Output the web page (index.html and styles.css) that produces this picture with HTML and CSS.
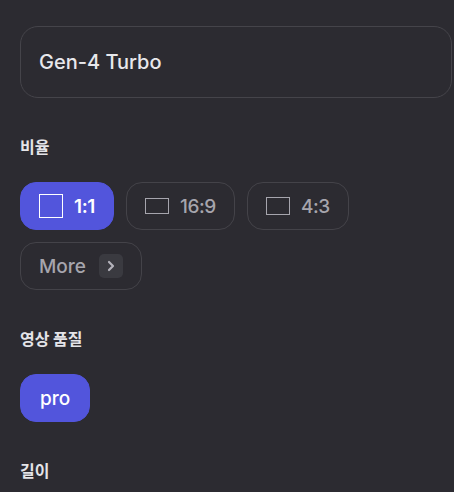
FILE: index.html
```html
<!DOCTYPE html>
<html>
<head>
    <meta charset="utf-8">
    <link rel="stylesheet" href="styles.css">
</head>
<body>
<div class="model">Gen-4 Turbo</div>

<div class="section">
    <div class="label">비율</div>
    <div class="chips">
        <div class="chip on"><span class="shape sq"></span>1:1</div>
        <div class="chip"><span class="shape wide"></span>16:9</div>
        <div class="chip"><span class="shape std"></span>4:3</div>
        <div class="chip more">More<span class="arrow">
            <svg width="24" height="24" viewBox="0 0 24 24"><path d="M10 8l4 4-4 4" fill="none" stroke="#b4b3bb" stroke-width="2.2" stroke-linecap="round" stroke-linejoin="round"/></svg>
        </span></div>
    </div>
</div>

<div class="section">
    <div class="label">영상 품질</div>
    <div class="chips">
        <div class="chip on pro">pro</div>
    </div>
</div>

<div class="section">
    <div class="label">길이</div>
</div>
</body>
</html>
```

FILE: styles.css
```css
body{
    margin:0;
    padding:26px 2px 0 20px;
    background:#2c2b31;
    font-family: Inter, "Noto Sans CJK KR", sans-serif;
    color:#e6e6ea;
}
.model{
    height:72px;
    box-sizing: border-box;
    border:1px solid #45444a;
    border-radius:18px;
    padding-left:18px;
    display:flex;
    align-items:center;
    font-size:20px;
    font-weight:500;
    color:#e8e8ec;
}
.section{
    margin-top:36px;
}
.label{
    font-family: "Noto Sans CJK KR", sans-serif;
    font-size:16px;
    font-weight:700;
    line-height:24px;
    color:#e4e4e8;
    margin-bottom:24px;
}
.chips{
    display:flex;
    flex-wrap:wrap;
    gap:12px;
}
.chip{
    height:48px;
    box-sizing:border-box;
    border:1px solid #444349;
    border-radius:16px;
    padding:0 18px;
    display:inline-flex;
    align-items:center;
    gap:11px;
    font-size:19px;
    font-weight:500;
    letter-spacing:-0.4px;
    color:#a6a5ad;
}
.chip.on{
    background:#5255dc;
    border-color:#5255dc;
    color:#fff;
    font-weight:600;
}
.shape{
    display:block;
    width:24px;
    box-sizing:border-box;
    border:1px solid #a6a5ad;
}
.shape.sq{
    height:24px;
    border-color:#fff;
}
.shape.wide{
    height:16px;
}
.shape.std{
    height:18px;
}
.chip.more{
    gap:13px;
    letter-spacing:0;
}
.arrow{
    width:24px;
    height:24px;
    border-radius:5px;
    background:#3a3a40;
    display:block;
}
.arrow svg{
    display:block;
}
.chip.pro{
    padding:0 19px;
    font-weight:500;
    letter-spacing:0;
}
```
